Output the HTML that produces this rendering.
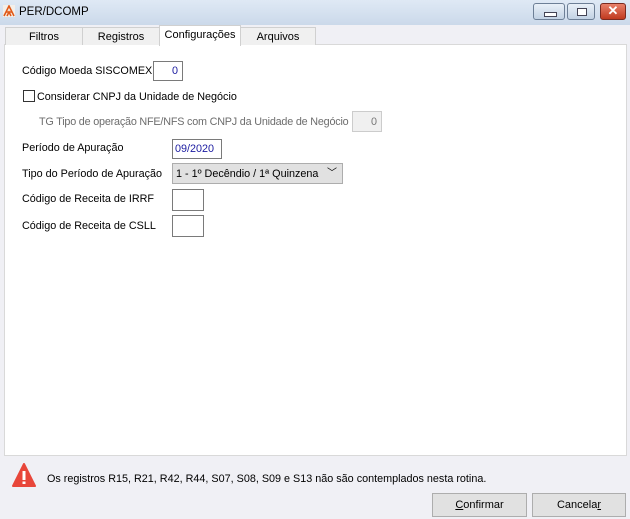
<html><head><style>
body{margin:0;width:630px;height:519px;background:#f0f0f5;font-family:"Liberation Sans",sans-serif;font-size:10.8px;color:#000;position:relative;overflow:hidden}
.a{position:absolute}
.tb{left:0;top:0;width:630px;height:25px;background:linear-gradient(#dfe9f5,#cbd9ea);}
.tab{top:27px;height:17px;border:1px solid #d0d0d0;border-bottom:none;background:#f0f0f0;text-align:center;line-height:18px;font-size:11px}
.panel{left:4px;top:44px;width:621px;height:410px;background:#fff;border:1px solid #d9d9d9}
.in{border:1px solid #7a7a7a;background:#fff;box-sizing:border-box;text-align:right;padding-right:4px;color:#1a1aa0;line-height:19px}
.btn{top:493px;height:24px;border:1px solid #adadad;background:#e1e1e1;box-sizing:border-box;text-align:center;line-height:22px;font-size:11px}
.wb{top:3px;height:17px;border:1px solid #6d7f96;border-radius:3px;background:linear-gradient(#e9f0f8,#c2d2e4);box-sizing:border-box}
</style></head><body>
<div class="a tb"></div>
<svg class="a" style="left:3px;top:5px" width="12" height="12"><rect width="12" height="12" fill="#f4efe9"/><path d="M1 11L6 1L11 11M3 7h6M4 11l2-4 2 4" stroke="#e05a1a" stroke-width="1.6" fill="none"/></svg>
<div class="a" style="left:19px;top:6px;font-size:11.5px">PER/DCOMP</div>
<div class="a wb" style="left:533px;width:32px"><div class="a" style="left:10px;top:8px;width:11px;height:3px;background:#fff;border:1px solid #445"></div></div>
<div class="a wb" style="left:567px;width:28px"><div class="a" style="left:9px;top:4px;width:8px;height:6px;border:1px solid #445;background:#fff"></div></div>
<div class="a wb" style="left:600px;width:26px;border-color:#7a2a20;background:linear-gradient(#e8806a,#c03a20);color:#fff;text-align:center;font-weight:bold;font-size:13px;line-height:14px">✕</div>
<div class="a panel"></div>
<div class="a tab" style="left:5px;width:76px">Filtros</div>
<div class="a tab" style="left:82px;width:76px">Registros</div>
<div class="a tab" style="left:240px;width:74px">Arquivos</div>
<div class="a tab" style="left:159px;top:25px;height:20px;width:80px;background:#fff;border-color:#d0d0d0;line-height:19px">Configurações</div>
<div class="a" style="left:22px;top:65px">Código Moeda SISCOMEX</div>
<div class="a in" style="left:153px;top:61px;width:30px;height:20px">0</div>
<div class="a" style="left:23px;top:90px;width:12px;height:12px;border:1px solid #333;box-sizing:border-box;background:#fff"></div>
<div class="a" style="left:37px;top:91px">Considerar CNPJ da Unidade de Negócio</div>
<div class="a" style="left:39px;top:116px;color:#6d6d6d;letter-spacing:-0.2px">TG Tipo de operação NFE/NFS com CNPJ da Unidade de Negócio</div>
<div class="a in" style="left:352px;top:111px;width:30px;height:21px;background:#f0f0f0;border-color:#ccc;color:#777;line-height:20px">0</div>
<div class="a" style="left:22px;top:142px">Período de Apuração</div>
<div class="a in" style="left:172px;top:139px;width:50px;height:20px;text-align:left;padding-left:2px">09/2020</div>
<div class="a" style="left:22px;top:168px">Tipo do Período de Apuração</div>
<div class="a" style="left:172px;top:163px;width:171px;height:21px;border:1px solid #adadad;background:#e1e1e1;box-sizing:border-box;padding-left:3px;line-height:20px">1 - 1º Decêndio / 1ª Quinzena<span class="a" style="right:5px;top:0;font-size:10px">﹀</span></div>
<div class="a" style="left:22px;top:193px">Código de Receita de IRRF</div>
<div class="a in" style="left:172px;top:189px;width:32px;height:22px"></div>
<div class="a" style="left:22px;top:220px">Código de Receita de CSLL</div>
<div class="a in" style="left:172px;top:215px;width:32px;height:22px"></div>
<svg class="a" style="left:12px;top:463px" width="24" height="24"><path d="M12 1L23 23H1Z" fill="#e8463a" stroke="#e8463a" stroke-linejoin="round" stroke-width="2"/><rect x="10.5" y="8" width="3" height="9" fill="#fff"/><rect x="10.5" y="18.5" width="3" height="2.5" fill="#fff"/></svg>
<div class="a" style="left:47px;top:473px">Os registros R15, R21, R42, R44, S07, S08, S09 e S13 não são contemplados nesta rotina.</div>
<div class="a btn" style="left:432px;width:95px"><u>C</u>onfirmar</div>
<div class="a btn" style="left:532px;width:94px">Cancela<u>r</u></div>
</body></html>
